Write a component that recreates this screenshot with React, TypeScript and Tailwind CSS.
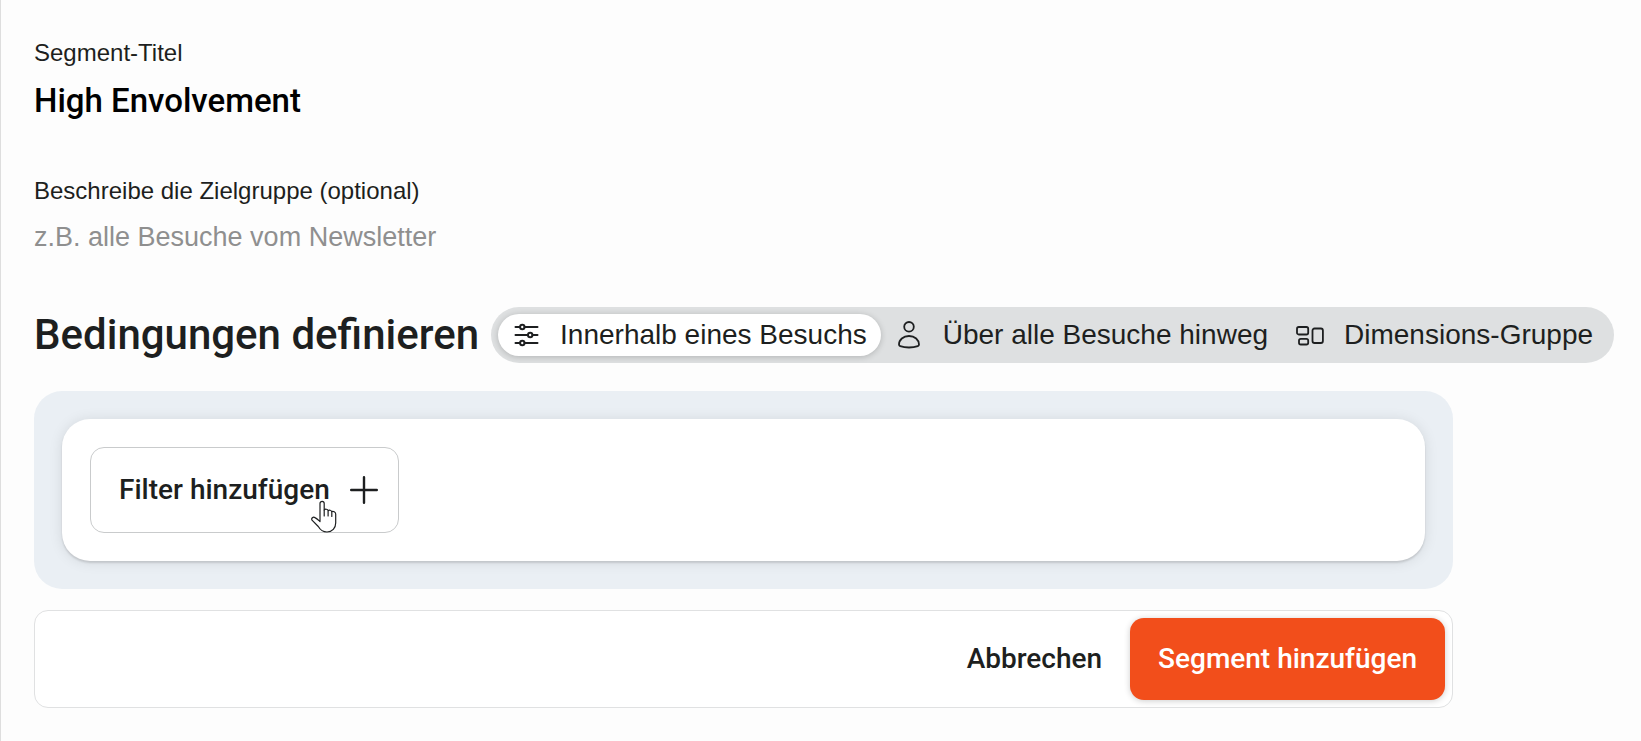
import { useState, type ReactNode } from "react";

type Scope = "visit" | "visitor" | "dimension";

const SlidersIcon = () => (
  <svg width="28" height="28" viewBox="0 0 28 28" fill="none" stroke="currentColor" strokeWidth="2" strokeLinecap="round" aria-hidden="true">
    <path d="M3.500 6H8M12.500 6H25.500M3.500 14H16M20.500 14h5M3.500 22H8M12.500 22H25.500" />
    <circle cx="10.300" cy="6" r="2.200" />
    <circle cx="18.200" cy="14" r="2.200" />
    <circle cx="10.300" cy="22" r="2.200" />
  </svg>
);

const PersonIcon = () => (
  <svg width="28" height="28" viewBox="0 0 28 28" fill="none" stroke="currentColor" strokeWidth="1.800" strokeLinejoin="round" aria-hidden="true">
    <circle cx="14" cy="5.800" r="4.800" />
    <path d="M14 15c5.800 0 10 3.900 10 8.600 0 .8-.4 1.200-1.200 1.500-2.200.8-5.300 1.400-8.800 1.400s-6.600-.6-8.800-1.400C4.400 24.800 4 24.400 4 23.600 4 18.900 8.200 15 14 15z" />
  </svg>
);

const BlocksIcon = () => (
  <svg width="28" height="28" viewBox="0 0 28 28" fill="none" stroke="currentColor" strokeWidth="1.800" aria-hidden="true">
    <rect x="1" y="6" width="11.200" height="7.500" rx="1.800" />
    <rect x="3" y="17.800" width="9.200" height="5.700" rx="1.800" />
    <rect x="16.500" y="7.500" width="10.400" height="14.500" rx="2" />
  </svg>
);

const PlusIcon = () => (
  <svg width="28" height="28" viewBox="0 0 28 28" fill="none" stroke="currentColor" strokeWidth="2.400" strokeLinecap="round" aria-hidden="true">
    <path d="M14 1.200v25.600M1.200 14h25.600" />
  </svg>
);

const HandCursor = () => (
  <svg width="26" height="33" viewBox="0 0 26 33" fill="#fff" stroke="#1d1f20" strokeWidth="1.200" strokeLinejoin="round" strokeLinecap="round" aria-hidden="true">
    <path d="M9 20V3.500a2.100 2.100 0 0 1 4.200 0V10c1-1.300 3.400-1 3.900.7 1.100-1 3.200-.5 3.600.9 1.500-.7 4 .1 4 2.500V23c0 5-3.500 9-8.700 9-4.500 0-7-2.500-8.700-5.500L1 20.200c-1-1.900 1-3.700 3-2.600 2 1 3.600 2.700 5 4z" />
    <path d="M13.200 10v6M17.100 11v5M20.800 12v4.500" />
  </svg>
);

const SCOPES: { id: Scope; label: string; icon: ReactNode }[] = [
  { id: "visit", label: "Innerhalb eines Besuchs", icon: <SlidersIcon /> },
  { id: "visitor", label: "Über alle Besuche hinweg", icon: <PersonIcon /> },
  { id: "dimension", label: "Dimensions-Gruppe", icon: <BlocksIcon /> },
];

export default function App() {
  const [title, setTitle] = useState("High Envolvement");
  const [description, setDescription] = useState("");
  const [scope, setScope] = useState<Scope>("visit");

  return (
    <main className="min-h-screen bg-[#fdfdfd] border-l border-[#dedede] pl-[33px] pr-5 pt-[37px] pb-6 text-[#1d1f20] font-['Liberation_Sans',Arial,sans-serif]">
      <form onSubmit={(e) => e.preventDefault()}>
        {/* Title */}
        <div className="flex flex-col">
          <label htmlFor="segment-title" className="text-2xl leading-8">
            Segment-Titel
          </label>
          <input
            id="segment-title"
            value={title}
            onChange={(e) => setTitle(e.target.value)}
            className="mt-2 w-full bg-transparent text-[33px] leading-12 h-12 font-medium text-black font-[Roboto,sans-serif] outline-none"
          />
        </div>

        {/* Description */}
        <div className="flex flex-col mt-[50px]">
          <label htmlFor="segment-description" className="text-2xl leading-8">
            Beschreibe die Zielgruppe (optional)
          </label>
          <input
            id="segment-description"
            value={description}
            onChange={(e) => setDescription(e.target.value)}
            placeholder="z.B. alle Besuche vom Newsletter"
            className="mt-2 w-full bg-transparent text-[27px] leading-11 h-11 placeholder:text-[#8f8f8f] outline-none"
          />
        </div>

        {/* Scope */}
        <div className="flex flex-wrap items-center gap-x-3 gap-y-3 mt-12">
          <h2 className="text-[42px] leading-14 font-medium font-[Roboto,sans-serif]">
            Bedingungen definieren
          </h2>
          <div role="group" aria-label="Bedingungen definieren" className="flex items-center h-14 px-[7px] rounded-full bg-[#dee0e1]">
            {SCOPES.map(({ id, label, icon }) => (
              <button
                key={id}
                type="button"
                aria-pressed={scope === id}
                onClick={() => setScope(id)}
                className={`flex items-center gap-5 h-[42px] px-3.5 rounded-full text-[28px] whitespace-nowrap ${
                  scope === id ? "bg-white shadow-[0_1px_6px_rgba(0,0,0,0.2)]" : ""
                }`}
              >
                {icon}
                {label}
              </button>
            ))}
          </div>
        </div>

        {/* Conditions */}
        <section className="max-w-[1419px] mt-7 p-7 rounded-[28px] bg-[#eaeff4]">
          <div className="p-7 rounded-[28px] bg-white shadow-[0_2px_2px_rgba(0,0,0,0.12),0_1px_14px_rgba(0,0,0,0.1)]">
            <button
              type="button"
              className="relative flex items-center gap-5 h-[86px] pl-7 pr-5 border border-[#c9cbcc] rounded-[14px] text-[28px] font-medium font-[Roboto,sans-serif]"
            >
              Filter hinzufügen
              <PlusIcon />
              <span className="absolute right-[61px] -bottom-px">
                <HandCursor />
              </span>
            </button>
          </div>
        </section>

        {/* Actions */}
        <footer className="flex items-center justify-end max-w-[1419px] mt-[21px] p-[7px] border border-[#e0e1e2] rounded-[14px] bg-white text-[28px] font-medium font-[Roboto,sans-serif]">
          <button type="button" className="h-[82px] px-7">
            Abbrechen
          </button>
          <button
            type="submit"
            className="h-[82px] px-7 rounded-[14px] bg-[#f24e1b] text-white shadow-[0_1px_6px_rgba(0,0,0,0.2)]"
          >
            Segment hinzufügen
          </button>
        </footer>
      </form>
    </main>
  );
}
